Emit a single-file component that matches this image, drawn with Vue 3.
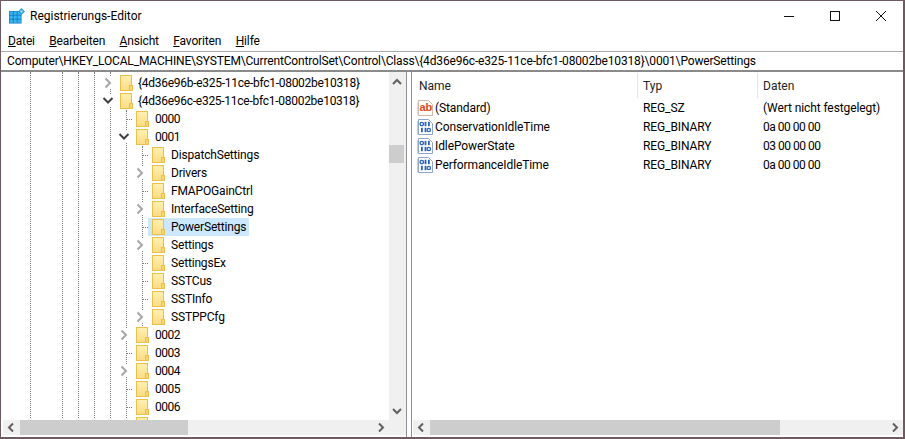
<script setup>
const guides = [
  { x: 29, top: 0, h: 346 },
  { x: 61, top: 0, h: 346 },
  { x: 77, top: 0, h: 346 },
  { x: 93, top: 0, h: 346 },
  { x: 109, top: 0, h: 346 },
  { x: 125, top: 38, h: 308 },
  { x: 141, top: 74, h: 180 }
]
const tree = [
  { level: 0, name: '{4d36e96b-e325-11ce-bfc1-08002be10318}', state: 'closed' },
  { level: 0, name: '{4d36e96c-e325-11ce-bfc1-08002be10318}', state: 'open' },
  { level: 1, name: '0000' },
  { level: 1, name: '0001', state: 'open' },
  { level: 2, name: 'DispatchSettings' },
  { level: 2, name: 'Drivers', state: 'closed' },
  { level: 2, name: 'FMAPOGainCtrl' },
  { level: 2, name: 'InterfaceSetting', state: 'closed' },
  { level: 2, name: 'PowerSettings', selected: true },
  { level: 2, name: 'Settings', state: 'closed' },
  { level: 2, name: 'SettingsEx' },
  { level: 2, name: 'SSTCus' },
  { level: 2, name: 'SSTInfo' },
  { level: 2, name: 'SSTPPCfg', state: 'closed' },
  { level: 1, name: '0002', state: 'closed' },
  { level: 1, name: '0003' },
  { level: 1, name: '0004', state: 'closed' },
  { level: 1, name: '0005' },
  { level: 1, name: '0006' },
  { level: 1, name: '' }
]
const values = [
  { name: '(Standard)', type: 'REG_SZ', data: '(Wert nicht festgelegt)', kind: 'sz' },
  { name: 'ConservationIdleTime', type: 'REG_BINARY', data: '0a 00 00 00', kind: 'bin' },
  { name: 'IdlePowerState', type: 'REG_BINARY', data: '03 00 00 00', kind: 'bin' },
  { name: 'PerformanceIdleTime', type: 'REG_BINARY', data: '0a 00 00 00', kind: 'bin' }
]
const menu = [
  ['D', 'atei'],
  ['B', 'earbeiten'],
  ['A', 'nsicht'],
  ['F', 'avoriten'],
  ['H', 'ilfe']
]
const grid = [0, 1, 2].flatMap((r) => [0, 1, 2].map((c) => ({ x: c * 4, y: 3 + r * 4 })))
const isNumeric = (s) => /^\d+$/.test(s)
const isGuid = (s) => s.startsWith('{')
</script>

<template>
  <div class="window">
    <header class="titlebar">
      <svg class="appicon" width="16" height="16" viewBox="0 0 16 16">
        <rect x="0" y="3" width="12.5" height="12.5" fill="#0f6fb8" />
        <rect v-for="(g, i) in grid" :key="i" :x="g.x + 0.5" :y="g.y + 0.5" width="3.3" height="3.3" fill="#35b6f2" />
        <path d="M12.5 0 L16 3.5 L12.5 7 L9 3.5 Z" fill="#2f9fdc" />
        <rect x="11.5" y="2.5" width="2" height="2" fill="#bfe8fb" />
      </svg>
      <span class="title">Registrierungs-Editor</span>
      <div class="winbtns">
        <svg width="12" height="12" viewBox="0 0 12 12"><path d="M1 6.5H11" stroke="#111" fill="none" /></svg>
        <svg width="12" height="12" viewBox="0 0 12 12"><rect x="1.5" y="1.5" width="9" height="9" stroke="#111" fill="none" /></svg>
        <svg width="12" height="12" viewBox="0 0 12 12"><path d="M1 1L11 11M11 1L1 11" stroke="#111" fill="none" /></svg>
      </div>
    </header>

    <nav class="menubar">
      <span v-for="m in menu" :key="m[0]" class="menuitem"><u>{{ m[0] }}</u>{{ m[1] }}</span>
    </nav>

    <div class="address">Computer\HKEY_LOCAL_MACHINE\SYSTEM\CurrentControlSet\Control\Class\{4d36e96c-e325-11ce-bfc1-08002be10318}\0001\PowerSettings</div>

    <main class="panes">
      <section class="left">
        <div class="leftmain">
          <div class="tree">
            <i v-for="g in guides" :key="g.x" class="guide" :style="{ left: g.x + 'px', top: g.top + 'px', height: g.h + 'px' }"></i>
            <div v-for="(n, i) in tree" :key="i" class="row" :style="{ paddingLeft: 99 + n.level * 16 + 'px' }">
              <span class="slot">
                <svg v-if="n.state === 'closed'" class="chev" width="16" height="12" viewBox="0 0 16 12">
                  <path d="M5.5 1.5L10 6L5.5 10.5" stroke="#a6a6a6" stroke-width="2" fill="none" />
                </svg>
                <svg v-else-if="n.state === 'open'" class="chev" width="16" height="12" viewBox="0 0 16 12">
                  <path d="M3.5 3L8 7.5L12.5 3" stroke="#404040" stroke-width="2" fill="none" />
                </svg>
                <i v-else class="tick"></i>
              </span>
              <span class="item" :class="{ selected: n.selected }">
                <svg class="folder" width="13" height="16" viewBox="0 0 13 16">
                  <defs>
                    <linearGradient id="fg" x1="0" y1="0" x2="0" y2="1">
                      <stop offset="0" stop-color="#fff0b0" />
                      <stop offset="1" stop-color="#fcdc84" />
                    </linearGradient>
                  </defs>
                  <rect x="0.5" y="0.5" width="11" height="15" fill="url(#fg)" stroke="#eac04c" />
                  <rect x="9.5" y="10.5" width="3" height="5" fill="#f7d676" stroke="#eac04c" />
                </svg>
                <span class="label" :class="{ num: isNumeric(n.name), guid: isGuid(n.name) }">{{ n.name }}</span>
              </span>
            </div>
          </div>
          <aside class="vscroll">
            <svg width="15" height="17" viewBox="0 0 15 17"><path d="M4 12L8 8L12 12" stroke="#606060" stroke-width="2" fill="none" /></svg>
            <div class="vthumb"></div>
            <svg width="15" height="17" viewBox="0 0 15 17"><path d="M4 6L8 10L12 6" stroke="#606060" stroke-width="2" fill="none" /></svg>
          </aside>
        </div>
        <div class="hscroll lefth">
          <svg width="17" height="15" viewBox="0 0 17 15"><path d="M10 3.5L6 7.5L10 11.5" stroke="#606060" stroke-width="2" fill="none" /></svg>
          <div class="hthumb t1"></div>
          <svg width="17" height="15" viewBox="0 0 17 15"><path d="M7 3.5L11 7.5L7 11.5" stroke="#606060" stroke-width="2" fill="none" /></svg>
          <div class="corner"></div>
        </div>
      </section>

      <div class="split"></div>

      <section class="right">
        <div class="list">
          <div class="head">
            <span class="c1">Name</span>
            <span class="c2">Typ</span>
            <span class="c3">Daten</span>
          </div>
          <div v-for="v in values" :key="v.name" class="vrow">
            <span class="c1 namecell">
              <svg class="vicon" width="16" height="16" viewBox="0 0 16 16">
                <path d="M1.5 0.5H11.5L15.5 4.5V15.5H1.5Z" fill="#fff" :stroke="v.kind === 'sz' ? '#d2b8aa' : '#8fa6c8'" />
                <path d="M0.5 2V15.5" :stroke="v.kind === 'sz' ? '#e8dcd4' : '#c4d0e2'" fill="none" />
                <template v-if="v.kind === 'sz'">
                  <text x="2.5" y="11" class="abtext">ab</text>
                </template>
                <template v-else>
                  <circle cx="4.8" cy="5" r="1.7" fill="none" stroke="#2a62b8" stroke-width="1.3" />
                  <rect x="7.6" y="2.8" width="1.8" height="4.4" fill="#2a62b8" />
                  <rect x="11" y="2.8" width="1.8" height="4.4" fill="#2a62b8" />
                  <rect x="4" y="8.8" width="1.8" height="4.4" fill="#2a62b8" />
                  <rect x="7.6" y="8.8" width="1.8" height="4.4" fill="#2a62b8" />
                  <circle cx="11.8" cy="11" r="1.7" fill="none" stroke="#2a62b8" stroke-width="1.3" />
                </template>
              </svg>
              {{ v.name }}
            </span>
            <span class="c2">{{ v.type }}</span>
            <span class="c3" :class="{ num: v.kind === 'bin' }">{{ v.data }}</span>
          </div>
        </div>
        <div class="hscroll righth">
          <svg width="17" height="15" viewBox="0 0 17 15"><path d="M10 3.5L6 7.5L10 11.5" stroke="#606060" stroke-width="2" fill="none" /></svg>
          <div class="hthumb t2"></div>
          <svg width="17" height="15" viewBox="0 0 17 15"><path d="M7 3.5L11 7.5L7 11.5" stroke="#606060" stroke-width="2" fill="none" /></svg>
        </div>
      </section>
    </main>
  </div>
</template>

<style>
html, body { margin: 0; background: #fff; overflow: hidden; }
</style>

<style scoped>
.window {
  width: 905px;
  height: 439px;
  box-sizing: border-box;
  border: 1px solid #6f5a62;
  border-width: 1px 2px 2px 1px;
  background: #fff;
  font-family: Roboto, "Noto Sans", sans-serif;
  font-size: 12px;
  color: #000;
  display: flex;
  flex-direction: column;
  overflow: hidden;
}
.titlebar {
  height: 29px;
  flex: none;
  display: flex;
  align-items: center;
  padding-left: 8px;
  padding-top: 1px;
  box-sizing: border-box;
}
.appicon { margin-right: 5px; }
.title { flex: 1; }
.winbtns {
  display: flex;
  gap: 34px;
  padding-right: 16px;
  margin-top: -1px;
}
.menubar {
  height: 21px;
  flex: none;
  display: flex;
  align-items: center;
  padding-left: 7px;
  padding-top: 1px;
  box-sizing: border-box;
  gap: 14.4px;
  letter-spacing: -0.15px;
}
.address {
  height: 21px;
  flex: none;
  box-sizing: border-box;
  border-top: 1px solid #a9a9a9;
  border-bottom: 2px solid #8a8a8a;
  padding-left: 6px;
  line-height: 18px;
  white-space: nowrap;
  overflow: hidden;
  letter-spacing: -0.165px;
}
.panes {
  flex: 1;
  display: flex;
  min-height: 0;
}
.left {
  width: 405px;
  flex: none;
  display: flex;
  flex-direction: column;
}
.leftmain {
  flex: 1;
  min-height: 0;
  display: flex;
}
.tree {
  position: relative;
  flex: 1;
  overflow: hidden;
  padding-top: 2px;
}
.guide {
  position: absolute;
  width: 0;
  border-left: 1px dotted #7a7a7a;
}
.row {
  position: relative;
  height: 18px;
  display: flex;
  align-items: center;
  white-space: nowrap;
}
.slot {
  width: 16px;
  flex: none;
  display: flex;
  align-items: center;
  height: 18px;
}
.chev {
  background: #fff;
  display: block;
}
.tick {
  width: 7px;
  margin-left: 10px;
  border-top: 1px dotted #7a7a7a;
}
.item {
  display: flex;
  align-items: center;
  height: 18px;
  padding: 0 3px 0 4px;
}
.item.selected { background: #cce8ff; }
.folder { display: block; margin-right: 6px; }
.label { letter-spacing: -0.17px; }
.label.num { letter-spacing: -0.5px; }
.label.guid { letter-spacing: -0.27px; margin-left: -1px; }
.vscroll {
  width: 17px;
  flex: none;
  background: #f0f0f0;
  display: flex;
  flex-direction: column;
}
.vscroll svg { display: block; flex: none; }
.vthumb {
  width: 15px;
  height: 18px;
  margin-top: 56px;
  margin-bottom: auto;
  background: #cdcdcd;
}
.hscroll {
  height: 15px;
  flex: none;
  background: #f0f0f0;
  display: flex;
  margin-bottom: 2px;
}
.hscroll svg { display: block; flex: none; }
.lefth { margin-left: 2px; }
.corner { width: 17px; flex: none; }
.hthumb { background: #cdcdcd; height: 15px; }
.t1 { width: 168px; margin-right: auto; }
.t2 { width: 350px; margin-right: auto; }
.split {
  width: 6px;
  flex: none;
  box-sizing: border-box;
  border-left: 1px solid #8f8f97;
  border-right: 1px solid #8f8f97;
  background: #fff;
}
.right {
  flex: 1;
  min-width: 0;
  display: flex;
  flex-direction: column;
  padding-left: 1px;
}
.list { flex: 1; min-height: 0; }
.head {
  height: 26px;
  display: flex;
  align-items: center;
  color: #222;
}
.head span { height: 25px; line-height: 26px; box-sizing: border-box; }
.head .c2, .head .c3 { border-left: 1px solid #e5e5e5; }
.vrow {
  height: 19px;
  display: flex;
  align-items: center;
  white-space: nowrap;
  letter-spacing: -0.1px;
}
.c1 { width: 224px; padding-left: 6px; box-sizing: border-box; flex: none; }
.c2 { width: 120px; padding-left: 5px; box-sizing: border-box; flex: none; }
.c3 { padding-left: 5px; box-sizing: border-box; flex: 1; }
.namecell { display: flex; align-items: center; padding-left: 4px; }
.vicon { margin-right: 2px; flex: none; }
.vrow .c2 { padding-left: 6px; }
.vrow .c3 { padding-left: 6px; }
.vrow .c3.num { letter-spacing: -0.5px; }
.abtext {
  font-family: "Liberation Sans", sans-serif;
  font-weight: 700;
  font-size: 11px;
  fill: #d8481c;
}
</style>
